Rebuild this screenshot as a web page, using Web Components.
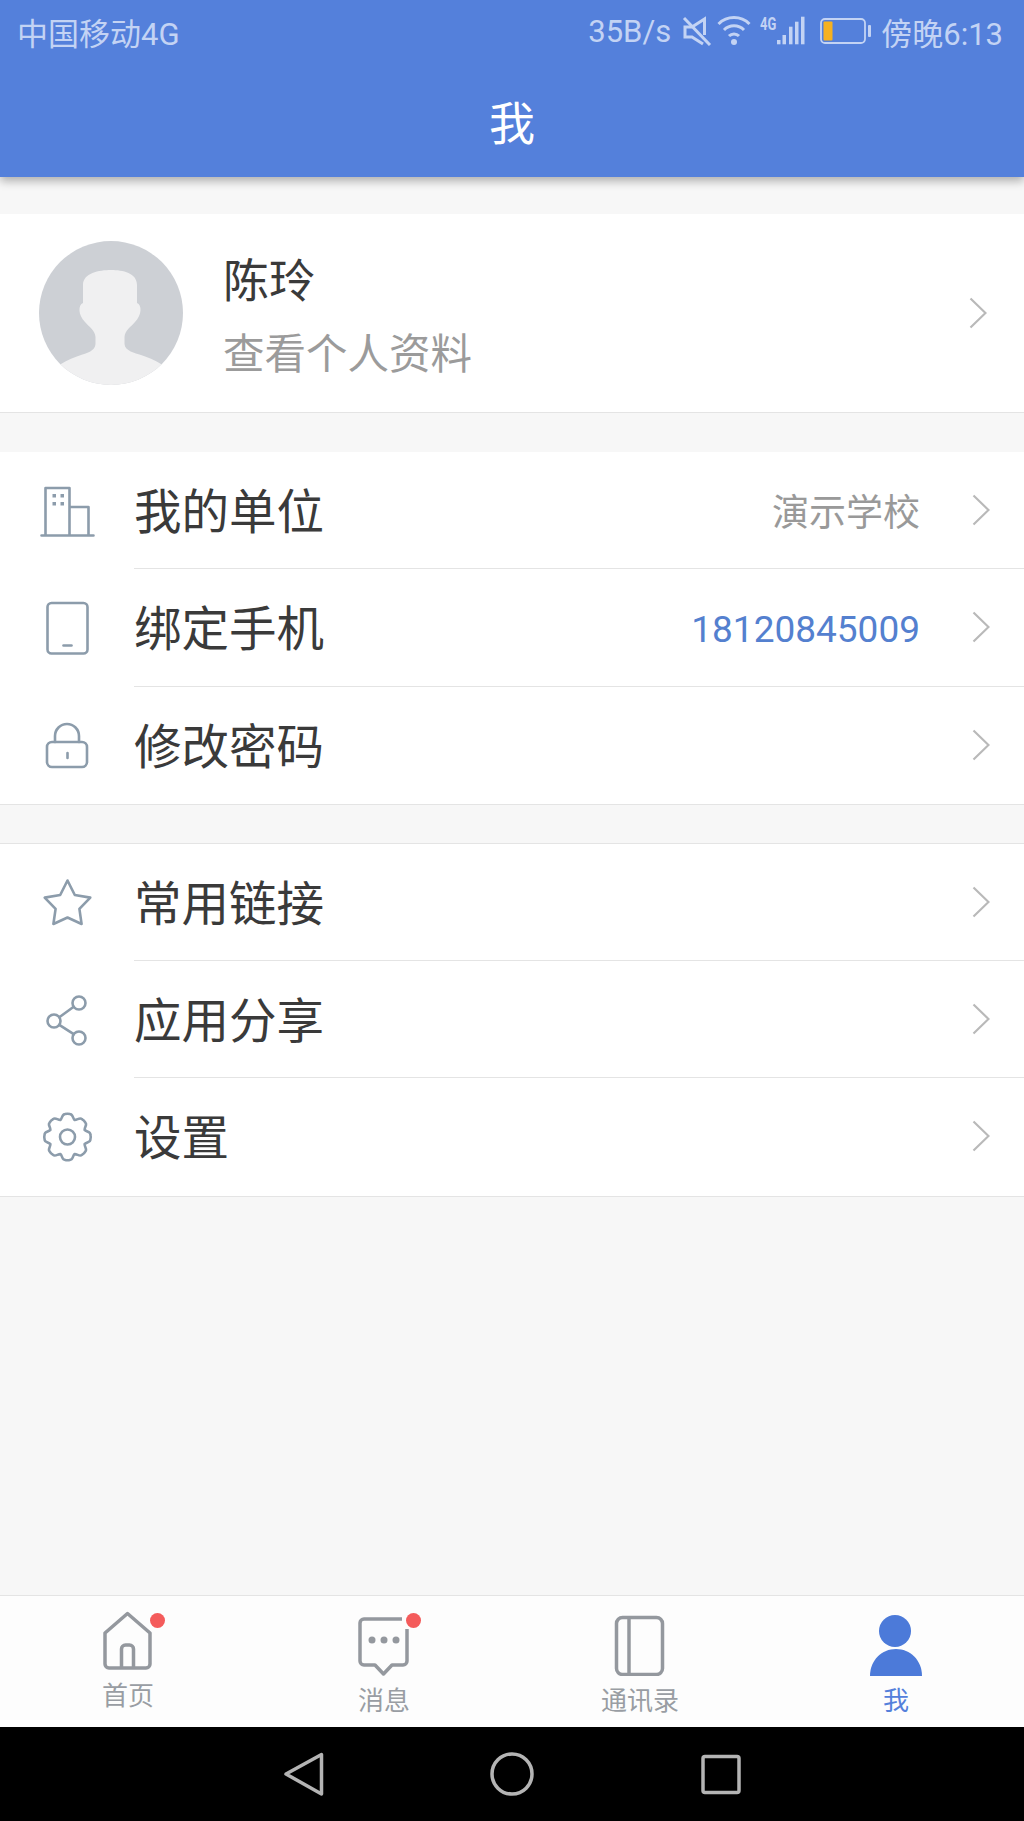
<!DOCTYPE html>
<html lang="zh-CN">
<head>
<meta charset="utf-8">
<title>我</title>
<style>
    html, body {
        margin: 0;
        height: 100%;
    }
    body {
        font-family: Roboto, "Noto Sans CJK SC", sans-serif;
        background: #f7f7f7;
    }
</style>
</head>
<body>
<app-shell>
    <app-header heading="我">
        <status-bar carrier="中国移动4G" speed="35B/s" time="傍晚6:13"></status-bar>
    </app-header>
    <profile-card>
        <span slot="name">陈玲</span>
        <span slot="hint">查看个人资料</span>
    </profile-card>
    <list-group class="first">
        <list-row icon="building">我的单位<span slot="value">演示学校</span></list-row>
        <list-row icon="phone">绑定手机<span slot="value" class="link">18120845009</span></list-row>
        <list-row icon="lock">修改密码</list-row>
    </list-group>
    <list-group class="second" ruled>
        <list-row icon="star">常用链接</list-row>
        <list-row icon="share">应用分享</list-row>
        <list-row icon="gear">设置</list-row>
    </list-group>
    <tab-bar>
        <tab-item icon="home" dot>首页</tab-item>
        <tab-item icon="message" dot>消息</tab-item>
        <tab-item icon="book">通讯录</tab-item>
        <tab-item icon="me" active>我</tab-item>
    </tab-bar>
    <nav-bar></nav-bar>
</app-shell>
<script>
const gearPath = (cx, cy, outer, inner, teeth) => {
    let d = ''
    const step = Math.PI * 2 / teeth
    for (let i = 0; i < teeth; i++) {
        const a = i * step - Math.PI / 2
        const pt = (r, t) => `${(cx + r * Math.cos(t)).toFixed(1)} ${(cy + r * Math.sin(t)).toFixed(1)}`
        d += `${i ? 'L' : 'M'}${pt(inner, a - step * .5)} `
        d += `C${pt(inner + 1, a - step * .34)} ${pt(outer + .5, a - step * .3)} ${pt(outer, a - step * .14)} `
        d += `Q${pt(outer + .6, a)} ${pt(outer, a + step * .14)} `
        d += `C${pt(outer + .5, a + step * .3)} ${pt(inner + 1, a + step * .34)} ${pt(inner, a + step * .5)} `
    }
    return d + 'Z'
}

const ROW_ICONS = {
    building: `<path d="M10.500 56V9h24v47M34.500 28h19v28M6.500 56.500h52"/>
        <g fill="#8c9cab" stroke="none"><rect x="17.500" y="15" width="3.500" height="3.500"/><rect x="25.500" y="15" width="3.500" height="3.500"/><rect x="17.500" y="23" width="3.500" height="3.500"/><rect x="25.500" y="23" width="3.500" height="3.500"/></g>`,
    phone: `<rect x="12.500" y="7" width="40" height="50.500" rx="4"/><path d="M28.500 49.500h8"/>`,
    lock: `<rect x="12" y="29" width="40" height="25" rx="5"/><path d="M20 29v-6a12 12 0 0 1 24 0v6M32.500 40v5"/>`,
    star: `<path d="M32.500 10.500 39.800 25 55.300 27.600 44.400 38.900 46.600 54 32.500 47.500 18.400 54 20.600 38.900 9.700 27.600 25.200 25Z"/>`,
    share: `<circle cx="44" cy="15" r="6.500"/><circle cx="19" cy="33" r="6.500"/><circle cx="44" cy="50" r="6.500"/><path d="M38.700 18.800 24.300 29.200M24.300 36.800 38.700 46.200"/>`,
    gear: `<path d="${gearPath(32.5, 32, 23, 18.5, 8)}"/><circle cx="32.500" cy="32" r="7.500"/>`
}

const TAB_ICONS = {
    home: { height: 60, body: `<path d="M9 22 31.500 2.500 54 22V53a4 4 0 0 1-4 4H13a4 4 0 0 1-4-4Z"/><path d="M25.500 57V38a4 4 0 0 1 4-4h4a4 4 0 0 1 4 4V57"/>` },
    message: { height: 65, body: `<path d="M50 8H12a4 4 0 0 0-4 4V50a4 4 0 0 0 4 4H23l8.500 9 8.500-9H51a4 4 0 0 0 4-4V18"/><g fill="#94989e" stroke="none"><circle cx="20" cy="29" r="3.500"/><circle cx="32" cy="29" r="3.500"/><circle cx="44" cy="29" r="3.500"/></g>` },
    book: { height: 65, body: `<rect x="8.500" y="6.500" width="46" height="57" rx="6"/><path d="M21 6.500V63.500"/>` },
    me: { height: 65, body: `<g fill="#4c7ad9" stroke="none"><circle cx="31" cy="20" r="16"/><path d="M6 65C6 49 18 38 32 38S58 49 58 65Z"/></g>` }
}

class AppShell extends HTMLElement {
    constructor() {
        super()
        this.attachShadow({ mode: 'open' })
    }
    connectedCallback() {
        this.shadowRoot.innerHTML = `
            <style>
                :host { display: flex; flex-direction: column; height: 1821px; overflow: hidden; }
                slot { display: contents; }
            </style>
            <slot></slot>`
    }
}

class AppHeader extends HTMLElement {
    constructor() {
        super()
        this.attachShadow({ mode: 'open' })
    }
    connectedCallback() {
        this.shadowRoot.innerHTML = `
            <style>
                :host {
                    display: block;
                    position: relative;
                    flex: none;
                    height: 177px;
                    background: #5480db;
                    box-shadow: 0 4px 9px rgba(0, 0, 0, .3);
                }
                h1 {
                    margin: 0;
                    box-sizing: border-box;
                    height: 111px;
                    padding-bottom: 4px;
                    display: flex;
                    align-items: center;
                    justify-content: center;
                    color: #fff;
                    font-size: 46px;
                    font-weight: 400;
                }
            </style>
            <slot></slot>
            <h1>${this.getAttribute('heading')}</h1>`
    }
}

class StatusBar extends HTMLElement {
    constructor() {
        super()
        this.attachShadow({ mode: 'open' })
    }
    connectedCallback() {
        this.shadowRoot.innerHTML = `
            <style>
                :host {
                    display: flex;
                    align-items: center;
                    justify-content: space-between;
                    box-sizing: border-box;
                    height: 66px;
                    padding: 0 21px 4px 17px;
                    color: #c3d3f4;
                    font-size: 31px;
                }
                .right { display: flex; align-items: center; align-self: stretch; }
                svg { display: block; flex: none; }
                .four-g {
                    flex: none;
                    align-self: flex-start;
                    width: 16px;
                    margin: 13px 0 0 9px;
                    font-size: 18px;
                    font-weight: 700;
                    transform: scaleX(.72);
                    transform-origin: left;
                }
                .time { margin-left: 9px; }
            </style>
            <span>${this.getAttribute('carrier')}</span>
            <div class="right">
                <span>${this.getAttribute('speed')}</span>
                <svg style="margin-left:11px" width="30" height="30" viewBox="0 0 30 30" fill="none" stroke="#c3d3f4" stroke-width="3">
                    <path d="M10 11H3V21H10L21 28M10 11 22.500 3V19"/><path d="M2 2 28 29"/>
                </svg>
                <svg style="margin-left:5px" width="34" height="30" viewBox="0 0 34 30" fill="none" stroke="#c3d3f4" stroke-width="3">
                    <path d="M1.500 8a22 22 0 0 1 31 0M7 14a14 14 0 0 1 20 0M12 20a7 7 0 0 1 10 0"/>
                    <circle cx="17" cy="26" r="3" fill="#c3d3f4" stroke="none"/>
                </svg>
                <span class="four-g">4G</span>
                <svg width="30" height="30" viewBox="0 0 30 30" fill="#c3d3f4">
                    <rect x="1" y="24" width="3.500" height="4.300"/><rect x="6.500" y="19" width="3.500" height="9.300"/><rect x="13" y="10.700" width="3.500" height="17.600"/><rect x="19" y="5.700" width="3.500" height="22.600"/><rect x="25" y=".7" width="3.500" height="27.600"/>
                </svg>
                <svg style="margin-left:14px" width="52" height="28" viewBox="0 0 52 28" fill="none">
                    <rect x="1" y="2" width="44" height="24" rx="4" stroke="#c3d3f4" stroke-width="1.800"/>
                    <rect x="3.500" y="4.500" width="9" height="19" rx="1" fill="#f5b120"/>
                    <rect x="48" y="8" width="3" height="12" rx="1" fill="#c3d3f4"/>
                </svg>
                <span class="time">${this.getAttribute('time')}</span>
            </div>`
    }
}

class ChevronIcon extends HTMLElement {
    constructor() {
        super()
        this.attachShadow({ mode: 'open' })
    }
    connectedCallback() {
        this.shadowRoot.innerHTML = `
            <style>
                :host { display: block; width: 18px; height: 32px; flex: none; }
                svg { display: block; }
            </style>
            <svg width="18" height="32" viewBox="0 0 18 32" fill="none" stroke="#b9b9b9" stroke-width="2.200">
                <path d="M1.500 1.500 16.500 16 1.500 30.500"/>
            </svg>`
    }
}

class ProfileCard extends HTMLElement {
    constructor() {
        super()
        this.attachShadow({ mode: 'open' })
    }
    connectedCallback() {
        this.shadowRoot.innerHTML = `
            <style>
                :host {
                    display: flex;
                    align-items: center;
                    flex: none;
                    box-sizing: border-box;
                    height: 199px;
                    margin-top: 37px;
                    padding: 0 37px 0 39px;
                    background: #fff;
                    border-bottom: 1px solid #e4e4e4;
                }
                svg { display: block; flex: none; }
                .text { flex: 1; display: flex; flex-direction: column; margin-left: 40px; padding-top: 10px; }
                ::slotted([slot=name]) { font-size: 46px; line-height: 64px; color: #3a3a3a; }
                ::slotted([slot=hint]) { font-size: 41.500px; line-height: 64px; margin-top: 10px; color: #9b9b9b; }
            </style>
            <svg width="144" height="144" viewBox="0 0 144 144">
                <defs><clipPath id="disc"><circle cx="72" cy="72" r="72"/></clipPath></defs>
                <circle cx="72" cy="72" r="72" fill="#cdd0d5"/>
                <path clip-path="url(#disc)" fill="#f0f0f1" d="M72 29C60 29 44 32 44 44V62C39 64 39 74 46 81 50 86 56 89 56.500 96V103C56 110 48 112 42 114 36 116 28 119 22 123L10 144H134L122 123C116 119 108 116 102 114 96 112 86 110 85.500 103V96C86 89 92 86 96 81 103 74 103 64 98 62V44C98 32 84 29 72 29Z"/>
            </svg>
            <div class="text"><slot name="name"></slot><slot name="hint"></slot></div>
            <chevron-icon></chevron-icon>`
    }
}

class ListGroup extends HTMLElement {
    constructor() {
        super()
        this.attachShadow({ mode: 'open' })
    }
    connectedCallback() {
        this.shadowRoot.innerHTML = `
            <style>
                :host {
                    display: block;
                    flex: none;
                    background: #fff;
                    border-bottom: 1px solid #e4e4e4;
                }
                :host(.first) { margin-top: 39px; }
                :host(.second) { margin-top: 38px; }
                :host([ruled]) { border-top: 1px solid #e4e4e4; }
            </style>
            <slot></slot>`
    }
}

class ListRow extends HTMLElement {
    constructor() {
        super()
        this.attachShadow({ mode: 'open' })
    }
    connectedCallback() {
        const icon = ROW_ICONS[this.getAttribute('icon')]
        this.shadowRoot.innerHTML = `
            <style>
                :host { display: flex; height: 117.250px; }
                .icon { width: 134px; flex: none; display: flex; align-items: center; justify-content: center; }
                svg { display: block; }
                .body {
                    flex: 1;
                    display: flex;
                    align-items: center;
                    box-sizing: border-box;
                    padding-right: 34px;
                    border-bottom: 1px solid #e4e4e4;
                }
                :host(:last-child) .body { border-bottom-color: transparent; }
                .label { flex: 1; font-size: 47.500px; color: #3a3a3a; margin-bottom: 3px; }
                ::slotted([slot=value]) { font-size: 37px; color: #999; margin-right: 52px; }
                ::slotted(.link) { color: #5480cf; margin-top: 4px; }
            </style>
            <div class="icon">
                <svg width="64" height="64" viewBox="0 0 64 64" fill="none" stroke="#8c9cab" stroke-width="2.600" stroke-linejoin="round" stroke-linecap="round">${icon}</svg>
            </div>
            <div class="body">
                <span class="label"><slot></slot></span>
                <slot name="value"></slot>
                <chevron-icon></chevron-icon>
            </div>`
    }
}

class TabBar extends HTMLElement {
    constructor() {
        super()
        this.attachShadow({ mode: 'open' })
    }
    connectedCallback() {
        this.shadowRoot.innerHTML = `
            <style>
                :host {
                    display: grid;
                    grid-template-columns: repeat(4, 1fr);
                    flex: none;
                    box-sizing: border-box;
                    height: 132px;
                    margin-top: auto;
                    padding-top: 15px;
                    background: #fdfdfd;
                    border-top: 1px solid #e4e4e4;
                }
            </style>
            <slot></slot>`
    }
}

class TabItem extends HTMLElement {
    constructor() {
        super()
        this.attachShadow({ mode: 'open' })
    }
    connectedCallback() {
        const icon = TAB_ICONS[this.getAttribute('icon')]
        const dot = this.hasAttribute('dot') ? '<i></i>' : ''
        this.shadowRoot.innerHTML = `
            <style>
                :host {
                    display: flex;
                    flex-direction: column;
                    align-items: center;
                    color: #999da3;
                    font-size: 26px;
                    line-height: 30px;
                }
                :host([active]) { color: #5480db; }
                .icon { position: relative; width: 64px; }
                svg { display: block; }
                i {
                    position: absolute;
                    left: 53.500px;
                    top: 2px;
                    width: 15px;
                    height: 15px;
                    border-radius: 50%;
                    background: #f45b5b;
                }
                span { margin-top: 10px; }
            </style>
            <div class="icon">
                <svg width="64" height="${icon.height}" viewBox="0 0 64 ${icon.height}" fill="none" stroke="#94989e" stroke-width="3.500" stroke-linejoin="round">${icon.body}</svg>
                ${dot}
            </div>
            <span><slot></slot></span>`
    }
}

class NavBar extends HTMLElement {
    constructor() {
        super()
        this.attachShadow({ mode: 'open' })
    }
    connectedCallback() {
        this.shadowRoot.innerHTML = `
            <style>
                :host {
                    display: flex;
                    align-items: center;
                    justify-content: center;
                    gap: 145px;
                    flex: none;
                    height: 94px;
                    background: #000;
                }
                svg { display: block; }
            </style>
            <svg width="64" height="64" viewBox="0 0 64 64" fill="none" stroke="#b4b4b4" stroke-width="3.500" stroke-linejoin="round">
                <path d="M15 32 50.500 12.500V52Z"/>
            </svg>
            <svg width="64" height="64" viewBox="0 0 64 64" fill="none" stroke="#b4b4b4" stroke-width="3.500">
                <circle cx="32" cy="32" r="20"/>
            </svg>
            <svg width="64" height="64" viewBox="0 0 64 64" fill="none" stroke="#b4b4b4" stroke-width="3.500" stroke-linejoin="round">
                <rect x="14" y="14.500" width="36" height="36" rx="2"/>
            </svg>`
    }
}

customElements.define('app-shell', AppShell)
customElements.define('app-header', AppHeader)
customElements.define('status-bar', StatusBar)
customElements.define('chevron-icon', ChevronIcon)
customElements.define('profile-card', ProfileCard)
customElements.define('list-group', ListGroup)
customElements.define('list-row', ListRow)
customElements.define('tab-bar', TabBar)
customElements.define('tab-item', TabItem)
customElements.define('nav-bar', NavBar)
</script>
</body>
</html>
